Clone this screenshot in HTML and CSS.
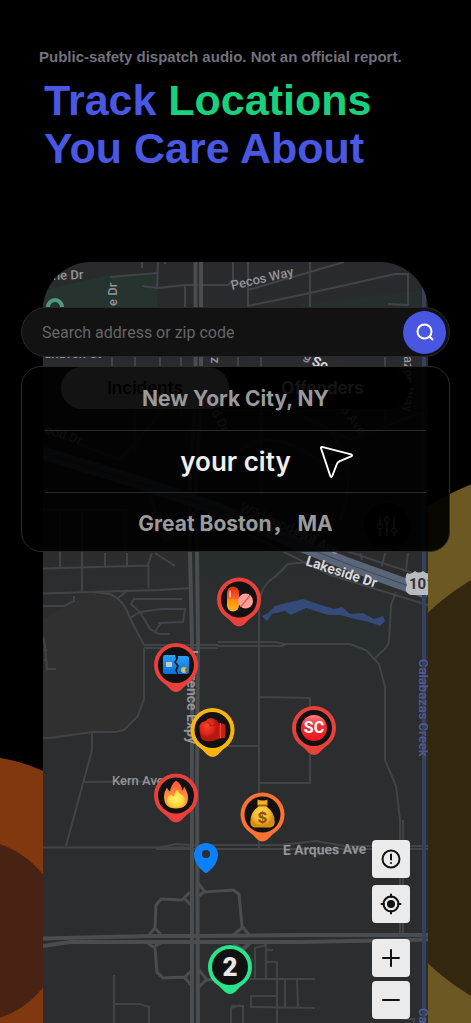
FILE: index.html
```html
<!DOCTYPE html>
<html lang="en">
<head>
<meta charset="utf-8">
<meta name="viewport" content="width=device-width, initial-scale=1">
<title>Track Locations You Care About</title>
<link rel="stylesheet" href="styles.css">
</head>
<body>
<header class="intro">
  <p class="disclaimer">Public-safety dispatch audio. Not an official report.</p>
  <h1 class="headline">Track <span class="accent">Locations</span><br>You Care About</h1>
</header>

<main class="stage">
  <section class="phone" aria-label="Incident map">
    <svg class="map" viewBox="43 262 385 761" preserveAspectRatio="xMidYMin slice">
      <defs>
        <linearGradient id="land" x1="0" y1="0" x2="0" y2="1">
          <stop offset="0" stop-color="#292a2d"/><stop offset=".38" stop-color="#2a2c2e"/><stop offset=".44" stop-color="#2c2d2f"/>
        </linearGradient>
        <linearGradient id="capsule" x1="0" y1="0" x2="0" y2="1">
          <stop offset="0" stop-color="#d92c0c"/><stop offset=".48" stop-color="#ff6030"/><stop offset=".5" stop-color="#ff8a00"/><stop offset="1" stop-color="#ffb52e"/>
        </linearGradient>
        <linearGradient id="flame" x1="0" y1="0" x2="0" y2="1">
          <stop offset="0" stop-color="#ff5233"/><stop offset=".5" stop-color="#ff8b3d"/><stop offset="1" stop-color="#ffb22e"/>
        </linearGradient>
        <radialGradient id="core"><stop offset="0" stop-color="#fff06a"/><stop offset=".6" stop-color="#ffe14a"/><stop offset="1" stop-color="#ffc63a"/></radialGradient>
        <radialGradient id="gold" cx=".45" cy=".45"><stop offset="0" stop-color="#ffd84f"/><stop offset=".7" stop-color="#f5b728"/><stop offset="1" stop-color="#d78d15"/></radialGradient>
        <radialGradient id="leather" cx=".4" cy=".35"><stop offset="0" stop-color="#f4452f"/><stop offset=".7" stop-color="#dc2418"/><stop offset="1" stop-color="#b5180f"/></radialGradient>
        <linearGradient id="badge" x1="0" y1="0" x2="0" y2="1"><stop offset="0" stop-color="#ff8080"/><stop offset=".4" stop-color="#ee2f35"/><stop offset="1" stop-color="#f01420"/></linearGradient>
        <linearGradient id="card" x1="0" y1="0" x2="0" y2="1"><stop offset="0" stop-color="#2aa0f6"/><stop offset="1" stop-color="#0b6fd6"/></linearGradient>
        <g id="pin"><path d="M-18 12L-5 25Q0 29 5 25L18 12Z"/><circle r="22"/><circle r="18" fill="#111"/></g>
      </defs>

      <rect x="43" y="262" width="385" height="761" fill="url(#land)"/>
      <path class="park" d="M43 290L110 275H158L157 306L152 357H43Z"/>
      <path class="park" d="M300 304L420 290V357H318Z" opacity=".5"/>
      <path class="field" d="M43 620L85 592 112 596 130 614 144 647V699L138 716 124 730 92 732 43 738Z"/>
      <path class="park" d="M200 553H290L272 580 262 600 198 572Z" opacity=".4"/>
      <path class="park" d="M262 606H392L386 650 370 658 345 644 262 642Z" opacity=".3"/>

      <g class="road">
        <path d="M110 277L158 273M158 262L157 288L142 286M158 288L185 285H228L233 280V262M185 285V357M142 262V268M165 262V264"/>
        <path d="M248 290L310 272 344 262M248 306L310 293 395 274H408V305M310 262V357M248 262V357M388 304L408 305"/>
        <path d="M112 357V368M135 357V450M160 357V400M181 357V420M238 357V400M261 357V500M385 357V420"/>
        <path d="M60 553V567M82 553V592M105 553V567M127 553V567M43 568.500L148 565.500M148 565L152 553M148.500 565V588M155 553L175 566"/>
        <path d="M43 593.500L90 592 160 590 190 588M43 606H64L74 601V596M92 592L110 594Q124 600 130 618L144 645H218M144 648H218M117 599L128 590M130 618L140 612 162 609H185L183 622 158 623M140 612L131 604 134 599H182M140 612L150 629 159 634H170M154 633L161 623M144 648V699L138 716 124 730 116 732H92L50 738H43M43 636L45 646 47 669H56M44 650H47M44 660H47"/>
        <path d="M92 732V750L66 846M84 782L190 781M43 847.500H190M200 845H280L316 841 345 846H428M156 848L176 844 200 845.500M156 849H428" />
        <path d="M259 848V604Q260 586 276 576L288 564 310 562M218 642H276L284 644H350L366 650 379 664 385 687V760L396 786 400 820V935M403 820V935M218 646H282L286 644M375 658L386 648 389 642 391 605 396 592M259 697L310 698V783H259M218 746H259"/>
        <path d="M360 553L362 560M385 553L382 566M408 553L406 570M114 975V1023M114 1004H140L149 1007V1023M231 1006H243V1023M231 1023V1008L240 1005M255 980V948L266 945V978M266 950H273M266 962H277V1023M250 979H315M285 979V1007M297 979L298 1007M278 996H251V1007L315 1008M402 1019H414V1023"/>
      </g>
      <g class="artery">
        <path d="M195.500 262V400L190 480V553L192 640V1023M201 262V400L196 480 197 553 198 640 197 780 198 1023" />
        <path d="M43 938.500L150 936H200L300 935H428M43 946L70 942H300L428 939.500"/>
        <path d="M148 936L155 928 156 905 161 899 182 900 190 892M184 898L191 905M198 883L205 892 233 890 239 894 242 926 249 935M199 896L205 891M155 928L162 936M242 928L232 936M146 942L155 948 157 972 163 978 185 977 191 971M155 946L163 942M199 970L207 980 234 978 241 970V953L250 943M199 987L207 979M184 977L191 985M232 942L242 949 249 943" stroke-width="3"/>
      </g>
      <g class="hidden-road">
        <path d="M43 430L120 460 155 420 180 380M43 510H125V550M82 508V553M60 508V553M230 380L350 440 428 410M240 450Q280 420 340 480M150 495L165 540 220 510M330 430Q360 470 340 520"/>
      </g>
      <path class="freeway" d="M43 453L150 486 220 510 300 545 345 563 428 593"/>
      <path class="freeway-line" d="M43 453L150 486 220 510 300 545 345 563 428 593"/>
      <path class="road" d="M230 507L310 539 428 578M240 530L330 575 428 605"/>
      <path class="creek" d="M424 262V1023"/>
      <path class="lake" d="M262 616L268 613 275 606 286 603 303 599 318 604 334 609 342 607 350 614 363 613 374 619 383 616 385 621 380 626 369 622 355 619 340 615 328 615 306 608 291 615 285 611 272 614 267 621Z"/>

      <circle cx="55" cy="307" r="7" fill="none" stroke="#4d9a83" stroke-width="4"/>
      <g class="label">
        <text transform="translate(53 280) rotate(-2)">ne Dr</text>
        <text transform="translate(117 306) rotate(-90)">e Dr</text>
        <text transform="translate(232 290) rotate(-13)">Pecos Way</text>
        <text transform="translate(44 358)">unaven St</text>
        <text transform="translate(211 357) rotate(90)">z</text>
        <text transform="translate(303 358) rotate(30)">g</text>
        <text class="strong" transform="translate(311 365) rotate(20)">So</text>
        <text transform="translate(404 356) rotate(90)">azon Way</text>
        <text transform="translate(44 433) rotate(18)">ood Dr</text>
        <text transform="translate(211 412) rotate(62)">d Dr</text>
        <text transform="translate(340 410) rotate(52)">o Ave</text>
        <text transform="translate(239 511) rotate(23)">Wildwood Ave</text>
        <text transform="translate(288 535) rotate(22)">d-Ad Ave</text>
        <text class="major" transform="translate(187 650) rotate(90)">Lawrence Expy</text>
        <text x="112" y="785">Kern Ave</text>
        <text class="major" transform="translate(283 855) rotate(-1)">E Arques Ave</text>
        <text class="strong" transform="translate(305 565) rotate(18)">Lakeside Dr</text>
        <text class="water" transform="translate(419 659) rotate(90)">Calabazas Creek</text>
        <text class="water" transform="translate(419 1008) rotate(90)">Ca</text>
      </g>
      <path d="M407 573Q411 575 415 571Q419 574 423 571Q427 575 432 573V595H411Q403 592 407 585Q404 579 407 573Z" fill="#b8bbbf"/>
      <text class="shield" x="409" y="589">101</text>

      <g transform="translate(239 599.500)"><use href="#pin" fill="#ea403b"/>
        <rect x="-12" y="-13" width="12" height="25" rx="6" fill="url(#capsule)"/><path d="M-9-8V-3" stroke="#ffb29a" stroke-width="2" stroke-linecap="round"/>
        <circle cx="6.500" cy="1.500" r="7.500" fill="#ff9d99"/><path d="M2 7L11-4" stroke="#d9605f" stroke-width="1.500"/></g>
      <g transform="translate(176 665)"><use href="#pin" fill="#ea403b"/>
        <path d="M-11-10H-1L0-6-2-3 1 1-1 5 1 9H-11Q-13 9-13 7V-8Q-13-10-11-10Z" fill="url(#card)"/><path d="M2-9H10Q13-9 13-7V7Q13 9 11 9H2L1 5 3 1 0-3 2-6Z" fill="url(#card)"/>
        <rect x="-10" y="-3" width="6" height="5" rx="1" fill="#c3ccc9"/><circle cx="8" cy="5" r="3" fill="#d9c05a"/><circle cx="11" cy="5" r="2" fill="#4f7b78"/></g>
      <g transform="translate(212.500 730)"><use href="#pin" fill="#fbb30f"/>
        <path d="M5-7L12-6Q14 0 12 8L4 9Z" fill="#c92015"/><path d="M8-7V8" stroke="#ee4938" stroke-width="1"/><path d="M-13-1Q-14-8-7-9Q-3-14 2-11Q7-9 6-3L6 9Q-2 13-10 10Q-13 6-13-1Z" fill="url(#leather)"/><path d="M-6-8Q-2-8-2-4Q0-5 3-5" fill="none" stroke="#b4190f" stroke-width="1"/></g>
      <g transform="translate(314 728)"><use href="#pin" fill="#ea403b"/><circle r="13" fill="url(#badge)"/><text class="pin-code" y="5">SC</text></g>
      <g transform="translate(176 795.500)"><use href="#pin" fill="#ea403b"/>
        <path d="M0-15Q6-11 6-5Q8-7 8-9Q12-3 12 2Q12 13 0 13Q-12 13-12 1Q-12-4-9-8Q-8-5-6-4Q-5-11 0-15Z" fill="url(#flame)"/><path d="M2-6Q3-1 7 0Q10 3 8 8Q5 12-1 12Q-9 11-9 4Q-8 0-5-1Q-4 1-2 1Q-1-4 2-6Z" fill="url(#core)"/></g>
      <g transform="translate(262.500 814.500)"><use href="#pin" fill="#ff7131"/>
        <path d="M-5-15Q0-13 5-15V-10L4-8Q12-2 12 6Q13 12 8 13H-8Q-13 12-12 6Q-12-2-4-8L-5-10Z" fill="url(#gold)"/><path d="M-5-9H5" stroke="#9c610e" stroke-width="2"/><text class="coin" y="8">$</text></g>
      <g transform="translate(230 967)"><use href="#pin" fill="#28e58c"/><text class="cluster" y="9">2</text></g>
      <path d="M206 843A12 12 0 0 1 218 855Q218 864 208 872Q206 874 204 872Q194 864 194 855A12 12 0 0 1 206 843ZM206 850A4 4 0 1 0 206 858A4 4 0 1 0 206 850Z" fill="#0a80fb" fill-rule="evenodd"/>
    </svg>

    <div class="phone-ui">
      <div class="tabs">
        <button class="tab tab-active" type="button">Incidents</button>
        <button class="tab" type="button">Offenders</button>
      </div>
      <button class="filter" type="button" aria-label="Filters">
        <svg width="20" height="20" viewBox="0 0 20 20"><path d="M3 0V8M3 13V20M10 0V1M10 6V20M17 0V12M17 17V20"/><circle cx="3" cy="10.500" r="2.500"/><circle cx="10" cy="3.500" r="2.500"/><circle cx="17" cy="14.500" r="2.500"/></svg>
      </button>
      <div class="controls">
        <button class="control" type="button" aria-label="Report"><svg width="24" height="24" viewBox="0 0 24 24"><circle cx="12" cy="12" r="8.500"/><path d="M12 7.500V12.500M12 16V16.100"/></svg></button>
        <button class="control" type="button" aria-label="My location"><svg width="24" height="24" viewBox="0 0 24 24"><circle cx="12" cy="12" r="7.500"/><circle cx="12" cy="12" r="4" fill="#111" stroke="none"/><path d="M12 2.500V5M12 19V21.500M2.500 12H5M19 12H21.500"/></svg></button>
        <div class="zoom">
          <button class="control" type="button" aria-label="Zoom in"><svg width="24" height="24" viewBox="0 0 24 24"><path d="M4 12H20M12 4V20"/></svg></button>
          <button class="control" type="button" aria-label="Zoom out"><svg width="24" height="24" viewBox="0 0 24 24"><path d="M4 12H20"/></svg></button>
        </div>
      </div>
    </div>
  </section>

  <section class="finder" aria-label="Choose a location">
    <form class="search">
      <input class="search-input" type="search" aria-label="Search address or zip code" placeholder="Search address or zip code">
      <button class="search-button" type="button" aria-label="Search">
        <svg width="20" height="20" viewBox="0 0 20 20"><circle cx="9.500" cy="9.500" r="7"/><path d="M14.500 14.500L17.500 17.500"/></svg>
      </button>
    </form>
    <ul class="cities">
      <li><button class="city" type="button">New York City, NY</button></li>
      <li><button class="city city-current" type="button"><span class="city-name">your city</span>
        <svg class="cursor" width="34" height="34" viewBox="0 0 36 36"><path d="M3 2L34 10Q36 11 34 12L22 17Q20 18 19 20L14 33Q13 35 12 33L2 3Q2 2 3 2Z"/></svg></button></li>
      <li><button class="city city-last" type="button">Great Boston， MA</button></li>
    </ul>
  </section>
</main>
</body>
</html>
```

FILE: styles.css
```css
* { box-sizing: border-box; }

body {
  margin: 0;
  min-height: 100vh;
  display: flex;
  flex-direction: column;
  color: #fff;
  font-family: Inter, "Noto Sans CJK SC", sans-serif;
  background:
    radial-gradient(circle at -29px 931px, #482314 91px, #82380f 92px, #82380f 175px, transparent 176px),
    radial-gradient(circle at calc(100% + 123px) 788px, #33280f 241px, #6c5822 242px, #6c5822 327px, transparent 328px),
    #000;
}

button, input { font: inherit; color: inherit; }
button { border: 0; padding: 0; background: none; cursor: pointer; }
svg { display: block; }

.intro {
  padding: 48px 39px 90px;
  font-family: "Liberation Sans", Arial, sans-serif;
  font-weight: 700;
}
.disclaimer { margin: 0; font-size: 15px; line-height: 18px; color: #73717f; }
.headline { margin: 10px 0 0 5px; font-size: 43px; line-height: 48px; color: #4957e2; }
.accent { color: #1bd07c; }

.stage { flex: 1; display: grid; }
.phone, .finder { grid-area: 1 / 1; min-width: 0; }

.phone {
  display: grid;
  margin: 0 43px;
  min-height: 700px;
  overflow: hidden;
  border-radius: 48px 48px 0 0;
}
.map { grid-area: 1 / 1; width: 100%; height: 100%; min-height: 0; }
.phone-ui {
  grid-area: 1 / 1;
  display: flex;
  flex-direction: column;
  align-items: flex-end;
  padding: 105px 18px 4px;
}

.park { fill: #26332f; }
.field { fill: #2f302f; }
.road { fill: none; stroke: #414447; stroke-width: 2; }
.hidden-road { fill: none; stroke: #44484c; stroke-width: 2; }
.artery { fill: none; stroke: #4a4d50; stroke-width: 4; }
.freeway { fill: none; stroke: #5a6577; stroke-width: 13; }
.freeway-line { fill: none; stroke: #3c4759; stroke-width: 1; }
.creek { fill: none; stroke: #35415f; stroke-width: 4; }
.lake { fill: #344a78; }
.label { font: 500 13px Roboto, sans-serif; fill: #939497; }
.major { font-size: 14px; font-weight: 700; }
.strong { font-size: 14px; font-weight: 700; fill: #d6d7d9; }
.water { font-weight: 600; fill: #4d5b90; }
.shield { font: 700 15px Roboto, sans-serif; fill: #303236; }
.pin-code { font: 700 16px Roboto, sans-serif; fill: #fff; text-anchor: middle; }
.coin { font: 700 15px Inter, sans-serif; fill: #8c520a; text-anchor: middle; }
.cluster { font: 900 26px Roboto, sans-serif; fill: #e8e8e8; text-anchor: middle; }

.tabs {
  align-self: stretch;
  display: grid;
  grid-template-columns: 49fr 51fr;
  gap: 6px;
  border-radius: 21px;
  background: #050505;
}
.tab { height: 42px; border-radius: 21px; font-size: 17px; font-weight: 600; color: #fff; }
.tab-active { background: #f2f2f2; color: #000; }
.filter {
  display: grid;
  place-items: center;
  width: 46px;
  height: 46px;
  margin-top: 94px;
  border-radius: 50%;
  background: #000;
}
.filter svg { fill: none; stroke: #fff; stroke-width: 1; }

.controls { display: grid; gap: 7px; margin-top: auto; }
.zoom { display: grid; gap: 4px; margin-top: 9px; }
.control {
  display: grid;
  place-items: center;
  width: 38px;
  height: 38px;
  border-radius: 4px;
  background: #ebebeb;
}
.control svg { fill: none; stroke: #111; stroke-width: 2; stroke-linecap: round; }

.finder {
  z-index: 1;
  align-self: start;
  display: grid;
  gap: 9px;
  padding: 45px 21px 0;
}
.search {
  display: flex;
  align-items: center;
  height: 50px;
  padding: 0 3px 0 20px;
  border: 1px solid #292929;
  border-radius: 25px;
  background: #121212;
}
.search-input {
  flex: 1;
  min-width: 0;
  padding: 0;
  border: 0;
  outline: 0;
  background: none;
  font-family: Roboto, sans-serif;
  font-size: 16px;
}
.search-input::placeholder { color: #666; opacity: 1; }
.search-button {
  display: grid;
  place-items: center;
  width: 43px;
  height: 43px;
  border-radius: 50%;
  background: #4856e2;
}
.search-button svg { fill: none; stroke: #fff; stroke-width: 2; stroke-linecap: round; }

.cities {
  margin: 0;
  padding: 0 23px;
  list-style: none;
  border: 1px solid #2b2b2b;
  border-radius: 20px;
  background: rgba(0, 0, 0, .92);
}
.cities li + li { border-top: 1px solid #2b2b2b; }
.city { display: block; width: 100%; height: 63px; font-size: 21px; font-weight: 700; color: #9a9a9a; }
.city-last { height: 58px; }
.city-current {
  display: grid;
  grid-template-columns: 1fr auto 1fr;
  align-items: center;
  gap: 28px;
  height: 61px;
  font-size: 26px;
  font-weight: 600;
  color: #f0f0f0;
}
.city-name { grid-column: 2; }
.cursor { fill: #000; stroke: #fff; stroke-width: 2; }
```
